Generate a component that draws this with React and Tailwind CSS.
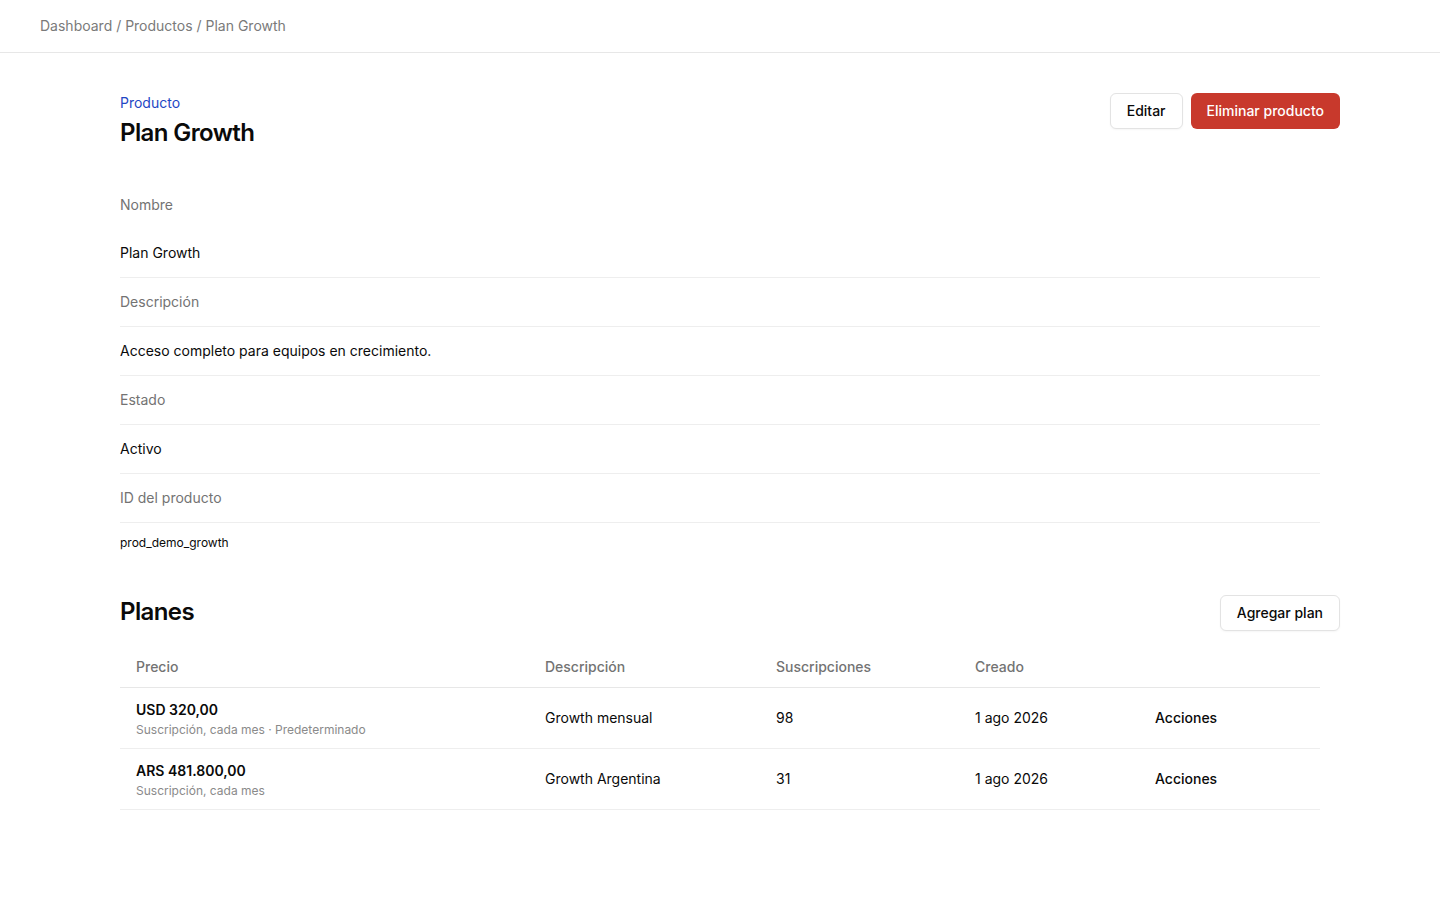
import React from 'react';

const details = [
  { label: 'Nombre', value: 'Plan Growth' },
  { label: 'Descripción', value: 'Acceso completo para equipos en crecimiento.' },
  { label: 'Estado', value: 'Activo' },
  { label: 'ID del producto', value: 'prod_demo_growth', mono: true },
];

const plans = [
  {
    price: 'USD 320,00',
    meta: 'Suscripción, cada mes · Predeterminado',
    description: 'Growth mensual',
    subs: '98',
    created: '1 ago 2026',
  },
  {
    price: 'ARS 481.800,00',
    meta: 'Suscripción, cada mes',
    description: 'Growth Argentina',
    subs: '31',
    created: '1 ago 2026',
  },
];

const cols = 'grid grid-cols-[409px_231px_199px_180px_1fr] items-center';

export default function App() {
  return (
    <div className="min-h-screen bg-white text-[#0a0a0a] font-['Inter','Liberation_Sans',sans-serif]">
      <header className="h-[53px] border-b border-[#e7e7e7] px-10 flex items-center">
        <nav className="text-sm text-[#7a7a7a]">Dashboard / Productos / Plan Growth</nav>
      </header>

      <main className="px-[100px] pt-10 pb-16">
        <div className="flex items-start justify-between pl-5">
          <div>
            <p className="text-sm leading-5 text-[#1f47c4]">Producto</p>
            <h1 className="mt-1 text-2xl leading-8 font-semibold tracking-tight">Plan Growth</h1>
          </div>
          <div className="flex items-center gap-2">
            <button className="h-9 px-4 rounded-md border border-[#e3e3e3] bg-white text-sm font-medium shadow-[0_1px_2px_rgba(0,0,0,0.04)]">
              Editar
            </button>
            <button className="h-9 px-4 rounded-md bg-[#c8392c] text-white text-sm font-medium">
              Eliminar producto
            </button>
          </div>
        </div>

        {/* product fields: label row, then value row; the first pair has no rule */}
        <dl className="mx-5 mt-8">
          {details.map((d, i) => (
            <React.Fragment key={d.label}>
              <dt
                className={`flex items-center text-sm text-[#737373] ${
                  i > 0 ? 'h-[49px] border-t border-[#eeeeee]' : 'h-12'
                }`}
              >
                {d.label}
              </dt>
              <dd
                className={`flex items-center ${i > 0 ? 'border-t border-[#eeeeee]' : ''} ${
                  d.mono ? 'h-[41px] text-xs' : i > 0 ? 'h-[49px] text-sm' : 'h-12 text-sm'
                }`}
              >
                {d.value}
              </dd>
            </React.Fragment>
          ))}
        </dl>

        <div className="mt-8 flex items-center justify-between pl-5">
          <h2 className="text-2xl leading-8 font-semibold tracking-tight -mt-0.5">Planes</h2>
          <button className="h-9 px-4 rounded-md border border-[#e3e3e3] bg-white text-sm font-medium shadow-[0_1px_2px_rgba(0,0,0,0.04)]">
            Agregar plan
          </button>
        </div>

        <div className="mx-5 mt-4 text-sm">
          <div className={`${cols} h-[41px] border-b border-[#e7e7e7] text-[#737373] font-medium`}>
            <div className="px-4">Precio</div>
            <div className="px-4">Descripción</div>
            <div className="px-4">Suscripciones</div>
            <div className="px-4">Creado</div>
            <div className="px-4" />
          </div>
          {plans.map((p) => (
            <div key={p.price} className={`${cols} h-[61px] border-b border-[#eeeeee]`}>
              <div className="px-4 pt-1">
                <div className="font-semibold leading-5">{p.price}</div>
                <div className="text-xs leading-5 text-[#8a8a8a]">{p.meta}</div>
              </div>
              <div className="px-4">{p.description}</div>
              <div className="px-4">{p.subs}</div>
              <div className="px-4">{p.created}</div>
              <div className="px-4 font-medium">Acciones</div>
            </div>
          ))}
        </div>
      </main>
    </div>
  );
}
